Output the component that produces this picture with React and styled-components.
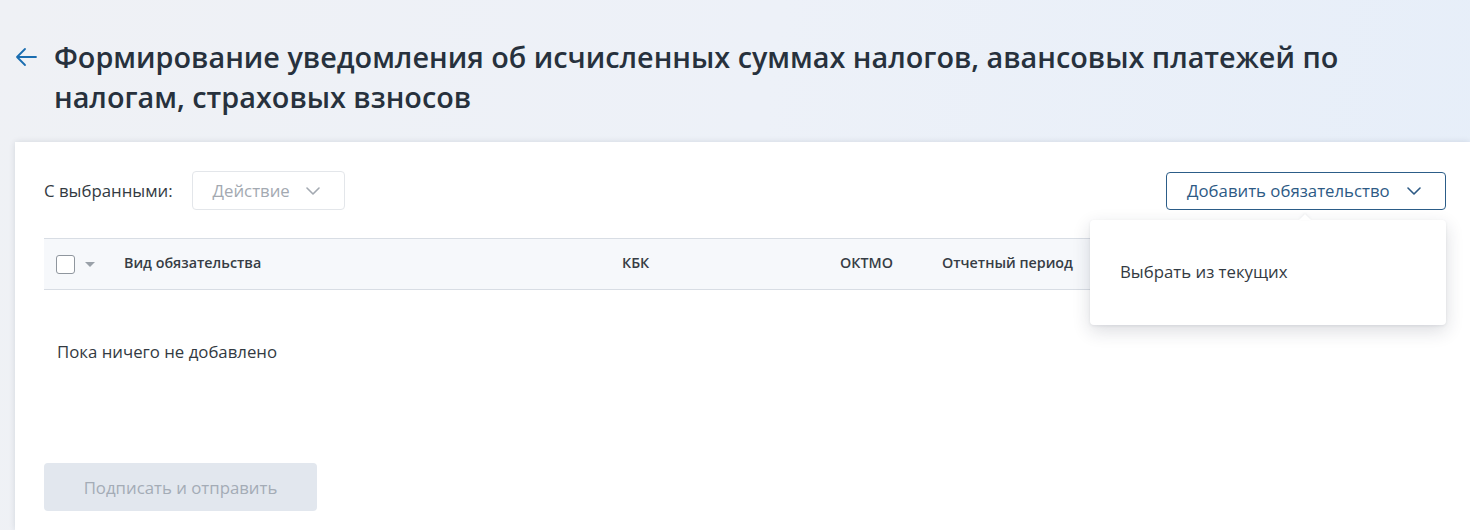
import React from "react";
import styled, { createGlobalStyle } from "styled-components";

const GlobalStyle = createGlobalStyle`
  html, body {
    margin: 0;
    padding: 0;
    overflow: hidden;
  }
  body {
    font-family: "Open Sans", "Noto Sans", sans-serif;
    color: #2b333d;
    background: linear-gradient(100deg, #eff1f5 0%, #edf1f8 50%, #e6eef9 100%);
  }
`;

const Page = styled.div`
  width: 1470px;
  height: 530px;
  display: flex;
  flex-direction: column;
  padding-left: 15px;
  box-sizing: border-box;
`;

const Header = styled.div`
  display: flex;
  align-items: flex-start;
  gap: 17px;
  padding: 37px 60px 0 0;
  height: 142px;
  box-sizing: border-box;
`;

const BackButton = styled.button`
  border: none;
  background: none;
  padding: 0;
  margin-top: 9px;
  width: 22px;
  height: 22px;
  display: flex;
  cursor: pointer;
`;

const Title = styled.h1`
  margin: 0;
  font-size: 28.8px;
  line-height: 40px;
  font-weight: 600;
  color: #27313d;
  max-width: 1320px;
`;

const Card = styled.div`
  flex: 1;
  background: #fff;
  box-shadow: 0 0 6px rgba(20, 30, 50, 0.12);
  padding: 29px 24px 0 29px;
  display: flex;
  flex-direction: column;
`;

const Toolbar = styled.div`
  display: flex;
  align-items: center;
  height: 39px;
`;

const ToolbarLabel = styled.span`
  font-size: 16.8px;
  color: #333a42;
  margin-right: 19px;
`;

const ActionSelect = styled.div`
  display: flex;
  align-items: center;
  justify-content: space-between;
  width: 153px;
  height: 39px;
  box-sizing: border-box;
  border: 1px solid #e3e6ea;
  border-radius: 4px;
  padding: 0 24px 0 20px;
  font-size: 16.8px;
  color: #a3a9b1;
`;

const AddWrap = styled.div`
  margin-left: auto;
  position: relative;
`;

const AddButton = styled.button`
  display: flex;
  align-items: center;
  width: 280px;
  height: 38px;
  box-sizing: border-box;
  border: 1px solid #2c5d88;
  border-radius: 4px;
  background: #fff;
  padding: 0 24px 0 20px;
  font-family: inherit;
  font-size: 16.8px;
  color: #2d5a85;
  justify-content: space-between;
  cursor: pointer;
`;

const Menu = styled.div`
  position: absolute;
  top: 48px;
  right: 0;
  width: 356px;
  height: 105px;
  background: #fff;
  border-radius: 4px;
  box-shadow: 0 6px 18px rgba(30, 40, 60, 0.16), 0 1px 3px rgba(30, 40, 60, 0.08);
  display: flex;
  align-items: center;
  padding-left: 30px;
  box-sizing: border-box;
  z-index: 2;

  &::before {
    content: "";
    position: absolute;
    top: -6px;
    left: 209px;
    border-left: 6px solid transparent;
    border-right: 6px solid transparent;
    border-bottom: 6px solid #fff;
    filter: drop-shadow(0 -1px 1px rgba(30, 40, 60, 0.08));
  }
`;

const MenuItem = styled.div`
  font-size: 16.8px;
  color: #333a42;
  margin-top: -2px;
`;

const Table = styled.div`
  margin-top: 28px;
`;

const HeadRow = styled.div`
  display: grid;
  grid-template-columns: 80px 498px 218px 102px 1fr;
  align-items: center;
  height: 52px;
  box-sizing: border-box;
  background: #f6f8fb;
  border-top: 1px solid #d8dde4;
  border-bottom: 1px solid #d8dde4;
`;

const CheckCell = styled.div`
  display: flex;
  align-items: center;
  gap: 10px;
  padding-left: 12px;
`;

const Checkbox = styled.span`
  width: 19px;
  height: 19px;
  box-sizing: border-box;
  border: 1px solid #8f969e;
  border-radius: 3px;
  background: #fff;
`;

const Caret = styled.span`
  width: 0;
  height: 0;
  border-left: 5px solid transparent;
  border-right: 5px solid transparent;
  border-top: 5px solid #9aa1a9;
`;

const HeadCell = styled.div`
  font-size: 14.3px;
  font-weight: 600;
  color: #363d45;
  margin-top: -3px;
`;

const Empty = styled.div`
  margin-top: 51px;
  padding-left: 13px;
  font-size: 16.8px;
  line-height: 22px;
  color: #333a42;
`;

const SubmitButton = styled.button`
  margin-top: 100px;
  width: 273px;
  height: 48px;
  border: none;
  border-radius: 4px;
  background: #e2e7ee;
  color: #a4acb6;
  font-family: inherit;
  font-size: 16.8px;
  cursor: default;
`;

const Chevron = ({ color }) => (
  <svg width="14" height="8" viewBox="0 0 14 8" fill="none">
    <path d="M1 1l6 6 6-6" stroke={color} strokeWidth="1.6" strokeLinecap="round" strokeLinejoin="round" />
  </svg>
);

export default function App() {
  return (
    <>
      <GlobalStyle />
      <Page>
        <Header>
          <BackButton aria-label="Назад">
            <svg width="22" height="22" viewBox="0 0 22 22" fill="none">
              <path d="M21 11H2M10 3l-8 8 8 8" stroke="#1a6db0" strokeWidth="1.8" strokeLinecap="round" strokeLinejoin="round" />
            </svg>
          </BackButton>
          <Title>
            Формирование уведомления об исчисленных суммах налогов, авансовых платежей по налогам, страховых взносов
          </Title>
        </Header>
        <Card>
          <Toolbar>
            <ToolbarLabel>С выбранными:</ToolbarLabel>
            <ActionSelect>
              Действие
              <Chevron color="#a3a9b1" />
            </ActionSelect>
            <AddWrap>
              <AddButton>
                Добавить обязательство
                <Chevron color="#2d5a85" />
              </AddButton>
              <Menu>
                <MenuItem>Выбрать из текущих</MenuItem>
              </Menu>
            </AddWrap>
          </Toolbar>
          <Table>
            <HeadRow>
              <CheckCell>
                <Checkbox />
                <Caret />
              </CheckCell>
              <HeadCell>Вид обязательства</HeadCell>
              <HeadCell>КБК</HeadCell>
              <HeadCell>ОКТМО</HeadCell>
              <HeadCell>Отчетный период</HeadCell>
            </HeadRow>
          </Table>
          <Empty>Пока ничего не добавлено</Empty>
          <div>
            <SubmitButton>Подписать и отправить</SubmitButton>
          </div>
        </Card>
      </Page>
    </>
  );
}
